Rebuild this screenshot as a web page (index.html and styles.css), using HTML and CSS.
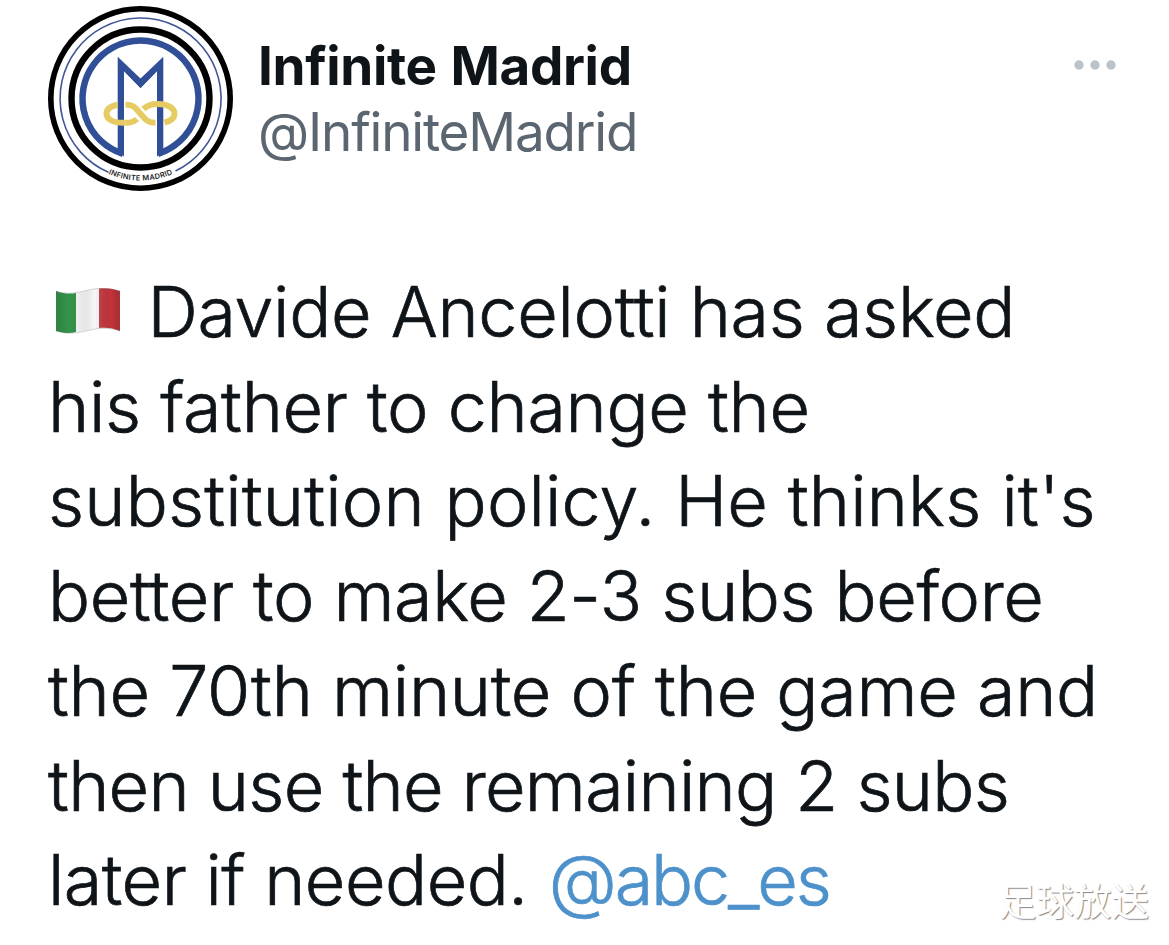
FILE: index.html
```html
<!DOCTYPE html>
<html lang="en">
<head>
    <meta charset="UTF-8">
    <meta name="viewport" content="width=device-width, initial-scale=1.0">
    <title>Infinite Madrid</title>
    <link rel="stylesheet" href="styles.css">
</head>
<body>
    <article class="tweet">
        <header class="tweet-header">
            <svg class="avatar" viewBox="-92.5 -92.5 185 185">
                <circle r="89.7" fill="#fff" stroke="#000" stroke-width="5.6"/>
                <path d="M-32 73.8A80.5 80.5 0 1 1 35 72.5" fill="none" stroke="#3f5795" stroke-width="1.6"/>
                <circle r="69" fill="none" stroke="#000" stroke-width="6.4"/>
                <path d="M-17.5 55.3A58 58 0 1 1 17.5 55.3" fill="none" stroke="#304f96" stroke-width="6.5"/>
                <path d="M-22.8 53V-41.8L0 -20L22.8 -41.8V53L16.5 58V-27L0 -10L-16.5 -27V58Z" fill="#304f96"/>
                <path class="hollow" d="M-16.5 60V-27L0 -10L16.5 -27V60Z"/>
                <g fill="none" stroke="#e5cb62" stroke-width="6">
                    <path d="M-23 6.2C-31 7.7 -34 11 -34 15.3C-34 20.5 -28 24.3 -17 24.3H-15"/>
                    <path d="M-15 6C-6 6 -4 11 0 15.3C4 20 7 24.3 15 24.3"/>
                    <path d="M-15 24.3C-9 24.3 -6 23 -3.5 20.5M3 10.5C7 6.7 11 5.5 17 5.5C28 5.5 34 10 34 15.3C34 19.5 31 22.5 24 24"/>
                </g>
                <path id="arc" d="M-58 58A82 82 0 0 0 58 58" fill="none"/>
                <text class="avatar-text"><textPath href="#arc" startOffset="50%" text-anchor="middle" textLength="66">INFINITE MADRID</textPath></text>
            </svg>
            <div class="names">
                <div class="name">Infinite Madrid</div>
                <div class="handle">@InfiniteMadrid</div>
            </div>
            <svg class="more" viewBox="0 0 42 10">
                <circle cx="5" cy="5" r="4.7"/>
                <circle cx="21" cy="5" r="4.7"/>
                <circle cx="37" cy="5" r="4.7"/>
            </svg>
        </header>
        <div class="tweet-text">
            <div class="line line-1">
                <svg class="flag" viewBox="0 0 64 46">
                    <defs>
                        <linearGradient id="shade" x1="0" x2="1" y1="0" y2="0">
                            <stop offset="0" stop-color="#000" stop-opacity=".12"/>
                            <stop offset=".2" stop-color="#000" stop-opacity="0"/>
                            <stop offset=".35" stop-color="#000" stop-opacity=".03"/>
                            <stop offset=".6" stop-color="#fff" stop-opacity=".2"/>
                            <stop offset=".85" stop-color="#000" stop-opacity="0"/>
                            <stop offset="1" stop-color="#000" stop-opacity=".15"/>
                        </linearGradient>
                    </defs>
                    <path d="M0 3C8 6 14 6 20 5V44C14 46 7 45 0 43Z" fill="#34934b"/>
                    <path d="M20 5C29 4 35 1 43 .5V40C35 41 28 43 20 44Z" fill="#f5f5f6"/>
                    <path d="M43 .5C51 -.5 58 1 64 3V43C57 40 50 39 43 40Z" fill="#c1343b"/>
                    <path d="M0 3C22 11 35 -6 64 3V43C38 34 25 51 0 43Z" fill="url(#shade)" stroke="#777" stroke-opacity=".4" stroke-width=".8"/>
                </svg>
                <span>Davide Ancelotti has asked</span>
            </div>
            <div class="line line-2">his father to change the</div>
            <div class="line line-3">substitution policy. He thinks it's</div>
            <div class="line line-4">better to make 2-3 subs before</div>
            <div class="line line-5">the 70th minute of the game and</div>
            <div class="line line-6">then use the remaining 2 subs</div>
            <div class="line line-7">later if needed. <span class="mention">@abc_es</span></div>
        </div>
    </article>
    <div class="watermark">足球放送</div>
</body>
</html>
```
FILE: styles.css
```css
body {
    margin: 0;
    background-color: #fff;
    color: #0f1419;
    font-family: Inter, "Liberation Sans", sans-serif;
}
.tweet {
    padding: 6px 48px 0;
}
.tweet-header {
    display: flex;
    align-items: flex-start;
    height: 259px;
}
.avatar {
    width: 185px;
    height: 185px;
}
.hollow {
    fill: #fff;
}
.avatar-text {
    font-size: 7.4px;
    font-weight: 600;
    fill: #222;
}
.names {
    flex: 1;
    padding: 27px 0 0 25px;
    font-size: 53px;
    line-height: 66px;
    white-space: nowrap;
}
.name {
    font-weight: 700;
    letter-spacing: -0.35px;
    word-spacing: 1.5px;
}
.handle {
    color: #5b6670;
    letter-spacing: -1.2px;
}
.more {
    width: 42px;
    height: 10px;
    margin: 54px 5px 0 0;
    fill: #bcc3c8;
}
.tweet-text {
    font-size: 70px;
    font-weight: 300;
    line-height: 94.7px;
    font-variant-ligatures: none;
    font-feature-settings: "calt" 0, "ccmp" 0;
    -webkit-text-stroke: 0.7px currentColor;
}
.line {
    white-space: nowrap;
}
.line-1 {
    letter-spacing: -0.3px;
}
.line-2 {
    letter-spacing: -0.3px;
}
.line-3 {
    letter-spacing: 0.16px;
}
.line-4 {
    letter-spacing: -0.38px;
}
.line-5 {
    letter-spacing: -0.27px;
}
.line-6 {
    letter-spacing: -0.75px;
}
.line-7 {
    letter-spacing: -0.5px;
}
.flag {
    width: 64px;
    height: 46px;
    margin: 0 8px 3px;
}
.mention {
    margin-left: 2px;
    color: #4d91cb;
    letter-spacing: -2.1px;
}
.watermark {
    position: absolute;
    left: 999px;
    top: 872px;
    font-family: "Noto Sans CJK SC", sans-serif;
    font-size: 37.5px;
    line-height: 54px;
    color: #fff;
    text-shadow: 1px 1px 1px #888;
}
```
